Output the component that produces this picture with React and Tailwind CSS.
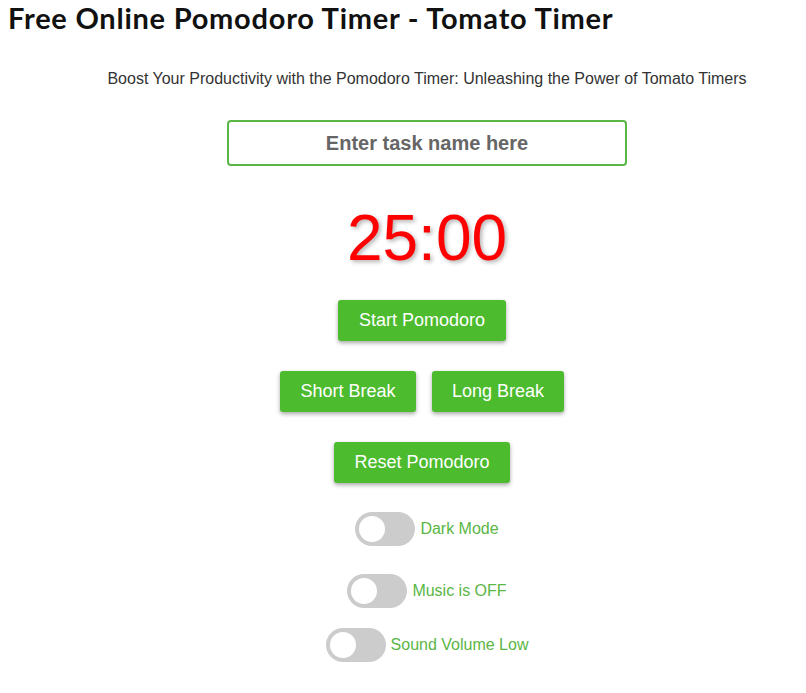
import { useState } from "react";

function Toggle({ label, on, onToggle }) {
    return (
        <div className="flex items-center gap-[5px]">
            <button
                onClick={onToggle}
                className={`relative w-[60px] h-[34px] rounded-full transition-colors ${on ? "bg-[#4cbb2e]" : "bg-[#cccccc]"}`}>
                <span className={`absolute top-[4px] w-[26px] h-[26px] rounded-full bg-white transition-all ${on ? "left-[30px]" : "left-[4px]"}`} />
            </button>
            <span className="text-[16px] text-[#5ab645]">{label}</span>
        </div>
    );
}

export default function App() {
    const [dark, setDark] = useState(false);
    const [music, setMusic] = useState(false);
    const [sound, setSound] = useState(false);

    const btn = "bg-[#4cbb2e] text-white text-[18px] h-[41px] rounded-[3px] shadow-[0_2px_4px_rgba(0,0,0,0.35)] hover:brightness-110";

    return (
        <div className="min-h-[693px] bg-white font-['Liberation_Sans',Arial,sans-serif]">
            <h1 className="pl-[8px] pt-[1px] text-[29px] leading-[34px] font-bold text-[#111] font-['Lato',sans-serif] tracking-[0.75px]">
                Free Online Pomodoro Timer - Tomato Timer
            </h1>
            <div className="pl-[48px] flex flex-col items-center">
                <p className="mt-[32px] text-[16px] text-[#333]">
                    Boost Your Productivity with the Pomodoro Timer: Unleashing the Power of Tomato Timers
                </p>
                <input
                    placeholder="Enter task name here"
                    className="mt-[29px] w-[400px] h-[46px] border-2 border-[#5ab645] rounded-[4px] text-center text-[20px] font-bold text-[#666] placeholder:text-[#666] outline-none"
                />
                <div className="mt-[30px] text-[64px] leading-[84px] text-[#ff0000] [text-shadow:2px_2px_4px_rgba(0,0,0,0.3)]">25:00</div>
                <div className="-ml-[10px] mt-[20px] flex flex-col items-center gap-[30px]">
                    <button className={`${btn} w-[168px]`}>Start Pomodoro</button>
                    <div className="flex gap-[16px]">
                        <button className={`${btn} w-[136px]`}>Short Break</button>
                        <button className={`${btn} w-[132px]`}>Long Break</button>
                    </div>
                    <button className={`${btn} w-[176px]`}>Reset Pomodoro</button>
                </div>
                <div className="mt-[29px]">
                    <Toggle label="Dark Mode" on={dark} onToggle={() => setDark(!dark)} />
                </div>
                <div className="mt-[28px]">
                    <Toggle label="Music is OFF" on={music} onToggle={() => setMusic(!music)} />
                </div>
                <div className="mt-[20px]">
                    <Toggle label="Sound Volume Low" on={sound} onToggle={() => setSound(!sound)} />
                </div>
            </div>
        </div>
    );
}
